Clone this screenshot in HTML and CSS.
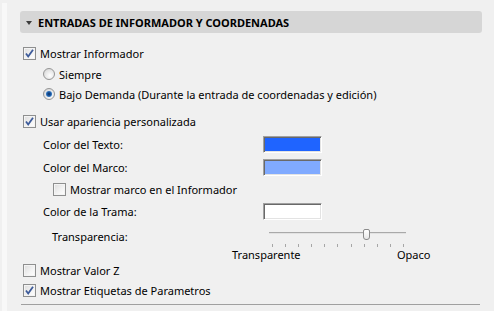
FILE: index.html
```html
<!DOCTYPE html>
<html lang="es">
<head>
  <meta charset="UTF-8" />
  <title>Entradas de Informador y Coordenadas</title>
  <link rel="stylesheet" href="styles.css">
</head>
<body>
  <div class="frame">
    <div class="edge"></div>

    <div class="panel">
      <!-- Section header -->
      <div class="header">
        <span class="arrow"></span>
        <span class="header-title">ENTRADAS DE INFORMADOR Y COORDENADAS</span>
      </div>

      <div class="row row-a">
        <span class="check checked"><svg viewBox="0 0 11 11"><path d="M2 5.5l2.2 3L9 1.8" /></svg></span>
        <span class="label">Mostrar Informador</span>
      </div>

      <div class="row radio-row">
        <span class="radio"></span>
        <span class="label">Siempre</span>
      </div>
      <div class="row radio-row">
        <span class="radio selected"></span>
        <span class="label">Bajo Demanda (Durante la entrada de coordenadas y edición)</span>
      </div>

      <div class="row row-d">
        <span class="check checked"><svg viewBox="0 0 11 11"><path d="M2 5.5l2.2 3L9 1.8" /></svg></span>
        <span class="label">Usar apariencia personalizada</span>
      </div>

      <div class="row color-row row-e">
        <span class="color-label">Color del Texto:</span>
        <span class="swatch swatch-text"></span>
      </div>
      <div class="row color-row">
        <span class="color-label">Color del Marco:</span>
        <span class="swatch swatch-frame"></span>
      </div>

      <div class="row sub-check">
        <span class="check"></span>
        <span class="label">Mostrar marco en el Informador</span>
      </div>

      <div class="row color-row">
        <span class="color-label">Color de la Trama:</span>
        <span class="swatch swatch-fill"></span>
      </div>

      <!-- Transparency slider -->
      <div class="slider-row">
        <span class="slider-label">Transparencia:</span>
        <div class="slider">
          <div class="track"></div>
          <div class="thumb"></div>
          <div class="ticks">
            <i></i><i></i><i></i><i></i><i></i><i></i><i></i><i></i><i></i><i></i><i></i>
          </div>
        </div>
      </div>
      <div class="slider-ends">
        <span class="end-min">Transparente</span>
        <span>Opaco</span>
      </div>

      <div class="row row-j">
        <span class="check"></span>
        <span class="label">Mostrar Valor Z</span>
      </div>
      <div class="row">
        <span class="check checked"><svg viewBox="0 0 11 11"><path d="M2 5.5l2.2 3L9 1.8" /></svg></span>
        <span class="label">Mostrar Etiquetas de Parametros</span>
      </div>

      <div class="rule"></div>
    </div>
  </div>
</body>
</html>
```

FILE: styles.css
```css
html, body {
  margin: 0;
  padding: 0;
  height: 100%;
  overflow: hidden;
  background: #f0f0f0;
  font-family: 'Noto Sans', sans-serif;
  font-size: 11px;
  color: #000;
}

.frame {
  display: flex;
  height: 100%;
}

.edge {
  width: 5px;
  margin: 3px 0 0 2px;
  background: #f8f8f8;
}

.panel {
  flex: 1;
  padding-top: 11px;
}

/* Header bar */
.header {
  display: flex;
  align-items: center;
  height: 22px;
  margin: 0 12px 0 13px;
  background: #d6d6d6;
  border-radius: 3px;
}

.arrow {
  width: 0;
  height: 0;
  margin: 1px 6px 0 6px;
  border-left: 3.5px solid transparent;
  border-right: 3.5px solid transparent;
  border-top: 4px solid #3c3c3c;
}

.header-title {
  font-weight: bold;
  font-size: 11px;
}

/* Generic rows */
.row {
  display: flex;
  align-items: center;
  height: 21px;
  padding-left: 16px;
}

.row .label {
  margin-left: 4px;
  white-space: nowrap;
}

.row-a {
  margin-top: 10px;
}

.radio-row {
  height: 20px;
  padding-left: 36px;
}

.row-d {
  margin-top: 7px;
}

.color-row {
  height: 23px;
  padding-left: 36px;
}

.row-e {
  height: 24px;
}

.color-label {
  width: 220px;
}

.sub-check {
  padding-left: 46px;
}

.row-j {
  height: 20px;
}

/* Checkbox */
.check {
  flex: none;
  position: relative;
  width: 11px;
  height: 11px;
  border: 1px solid #8e8f8f;
  background: linear-gradient(135deg, #dcdcdc 0%, #f4f4f4 60%, #ffffff 100%);
  box-shadow: inset 0 0 0 1px #f4f4f4;
}

.check svg {
  position: absolute;
  top: 0;
  left: 0;
  width: 11px;
  height: 11px;
}

.check path {
  fill: none;
  stroke: #3d5b9a;
  stroke-width: 1.8;
}

/* Radio */
.radio {
  flex: none;
  position: relative;
  width: 10px;
  height: 10px;
  border: 1px solid #959595;
  border-radius: 50%;
  background: radial-gradient(circle at 60% 65%, #ffffff 0%, #e8e8e8 50%, #cfcfcf 100%);
}

.radio.selected::after {
  content: "";
  position: absolute;
  top: 2px;
  left: 2px;
  width: 6px;
  height: 6px;
  border-radius: 50%;
  background: radial-gradient(circle at 50% 50%, #0d2f5e 0%, #1c5aa6 45%, #5aa7e8 100%);
}

/* Colour swatches */
.swatch {
  width: 57px;
  height: 15px;
  border: 1px solid;
  border-color: #a0a0a0 #ffffff #ffffff #a0a0a0;
  box-shadow: inset 1px 1px 0 #696969, inset -1px -1px 0 #e3e3e3;
}

.swatch-text {
  background: #1f64ff;
}

.swatch-frame {
  background: #80aaff;
}

.swatch-fill {
  background: #ffffff;
}

/* Slider */
.slider-row {
  display: flex;
  height: 26px;
  padding-left: 45px;
}

.slider-label {
  width: 217px;
  padding-top: 6px;
}

.slider {
  position: relative;
  width: 137px;
  height: 26px;
}

.track {
  margin-top: 9px;
  height: 1px;
  background: #a9a9a9;
  border-bottom: 1px solid #e2e2e2;
}

.thumb {
  position: absolute;
  top: 6px;
  left: 94px;
  width: 5px;
  height: 9px;
  border: 1px solid #8a8a8a;
  border-radius: 2px 2px 3px 3px;
  background: linear-gradient(#ffffff, #e6e6e6);
}

.ticks {
  display: flex;
  justify-content: space-between;
  margin: 10px 2px 0 3px;
}

.ticks i {
  width: 1px;
  height: 3px;
  background: #a6a6a6;
}

.slider-ends {
  display: flex;
  height: 11px;
  line-height: 11px;
  margin-left: 225px;
}

.end-min {
  width: 165px;
}

/* Bottom rule */
.rule {
  height: 1px;
  margin: 3px 14px 0 14px;
  background: #a0a0a0;
}
```
